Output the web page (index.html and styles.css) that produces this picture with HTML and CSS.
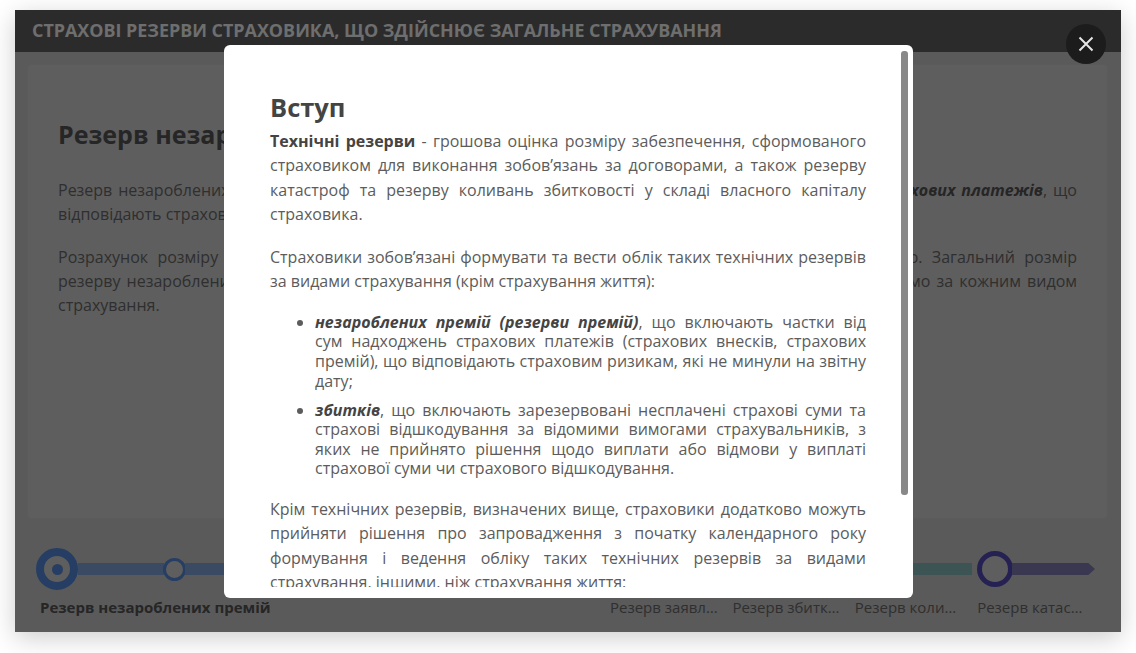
FILE: index.html
```html
<!DOCTYPE html>
<html lang="uk">

<head>
  <meta charset="UTF-8">
  <title>Страхові резерви</title>
  <link rel="stylesheet" href="styles.css">
</head>

<body>
  <div class="player">
    <header class="player-head">Страхові резерви страховика, що здійснює загальне страхування</header>

    <main class="card">
      <h2>Резерв незароблених премій</h2>
      <p>Резерв незароблених премій включає частки сум надходжень страхових внесків (страхових премій), <b><i>страхових платежів</i></b>, що відповідають страховим ризикам, які не минули на звітну дату.</p>
      <p>Розрахунок розміру резерву незароблених премій здійснюється за кожним видом страхування окремо. Загальний розмір резерву незароблених премій страховика дорівнює сумі резервів незароблених премій, обчислених окремо за кожним видом страхування.</p>
    </main>

    <div class="timeline">
      <div class="track">
        <span class="node node-big"><span class="dot"></span></span>
        <span class="seg seg-blue seg-a"></span>
        <span class="node node-small"></span>
        <span class="seg seg-blue seg-b"></span>
        <span class="seg seg-teal"></span>
        <span class="node node-last"></span>
        <span class="seg seg-purple"></span>
      </div>
      <div class="labels">
        <span class="label label-active">Резерв незароблених премій</span>
        <span class="label">Резерв заявлених збитків</span>
        <span class="label">Резерв збитків, які виникли</span>
        <span class="label">Резерв коливань збитковості</span>
        <span class="label">Резерв катастроф</span>
      </div>
    </div>

    <div class="dim"></div>
    <button class="close" aria-label="Закрити">
      <svg width="16" height="16" viewBox="0 0 16 16">
        <path d="M1.5 1.5l13 13M14.5 1.5l-13 13" stroke="#e6e6e6" stroke-width="2" fill="none" />
      </svg>
    </button>

    <div class="modal">
      <div class="modal-body">
        <h2>Вступ</h2>
        <p class="first"><b>Технічні резерви</b> - грошова оцінка розміру забезпечення, сформованого страховиком для виконання зобов’язань за договорами, а також резерву катастроф та резерву коливань збитковості у складі власного капіталу страховика.</p>
        <p>Страховики зобов’язані формувати та вести облік таких технічних резервів за видами страхування (крім страхування життя):</p>
        <ul>
          <li><span class="full-line"><b><i>незароблених премій (резерви премій)</i></b>, що включають частки від</span> сум надходжень страхових платежів (страхових внесків, страхових премій), що відповідають страховим ризикам, які не минули на звітну дату;</li>
          <li><b><i>збитків</i></b>, що включають зарезервовані несплачені страхові суми та страхові відшкодування за відомими вимогами страхувальників, з яких не прийнято рішення щодо виплати або відмови у виплаті страхової суми чи страхового відшкодування.</li>
        </ul>
        <p>Крім технічних резервів, визначених вище, страховики додатково можуть прийняти рішення про запровадження з початку календарного року формування і ведення обліку таких технічних резервів за видами страхування, іншими, ніж страхування життя:</p>
      </div>
      <div class="thumb"></div>
    </div>
  </div>
</body>

</html>
```

FILE: styles.css
```css
* {
  box-sizing: border-box;
}

html,
body {
  height: 100%;
}

body {
  margin: 0;
  padding: 10px 15px 21px;
  background: #fff;
  color: #5c5c5c;
  font-family: "Open Sans", sans-serif;
  overflow: hidden;
}

.player {
  position: relative;
  height: 622px;
  display: flex;
  flex-direction: column;
  background: #b4b4b4;
  box-shadow: 0 6px 24px rgba(0, 0, 0, .2);
}

.player-head {
  height: 42px;
  padding: 0 17px;
  flex: none;
  background: #565656;
  color: #dcdcdc;
  font-size: 17.9px;
  font-weight: 700;
  line-height: 41px;
  text-transform: uppercase;
  white-space: nowrap;
}

/* card with the slide text */
.card {
  height: 455px;
  margin: 12px 13px 0 12px;
  padding: 54px 30px 0;
  flex: none;
  background: #bcbcbc;
  border-radius: 4px;
  border: 1px solid #b6b6b6;
  color: #5e5e5e;
  font-size: 16px;
  line-height: 24px;
  text-align: justify;
}

.card h2 {
  margin: 0 0 29px;
  font-size: 25px;
  line-height: 30px;
  font-weight: 700;
  color: #4c4c4c;
  text-align: left;
}

.card b {
  color: #4c4c4c;
}

.card p {
  margin: 0 0 19px;
}

/* timeline */
.timeline {
  padding: 29px 26px 0 21px;
}

.track {
  display: flex;
  align-items: center;
  height: 42px;
}

.node {
  flex: none;
  border-radius: 50%;
  border-style: solid;
  background: #bcbcbc;
  display: flex;
  align-items: center;
  justify-content: center;
}

.node-big {
  width: 42px;
  height: 42px;
  border-width: 8px;
  border-color: #4c7cc8;
}

.dot {
  width: 11px;
  height: 11px;
  border-radius: 50%;
  background: #4c7cc8;
}

.node-small {
  width: 23px;
  height: 23px;
  border-width: 3px;
  border-color: #4c7cc8;
  margin-left: -1px;
  margin-right: -1px;
}

.node-last {
  width: 36px;
  height: 36px;
  border-width: 5px;
  border-color: #4a42a4;
  margin-left: 5px;
  margin-right: -1px;
}

.seg {
  height: 12px;
}

.seg-blue {
  background: #7494c4;
}

.seg-a {
  width: 86px;
}

.seg-b {
  width: 400px;
}

.seg-teal {
  flex: 1;
  background: #78a8a6;
}

.seg-purple {
  width: 83px;
  background: #7470a0;
  clip-path: polygon(0 0, 92% 0, 100% 50%, 92% 100%, 0 100%);
}

.labels {
  display: flex;
  margin-top: 7px;
  padding-left: 4px;
  color: #5e5e5e;
  font-size: 15px;
  line-height: 20px;
}

.label {
  width: 122.4px;
  padding-right: 14px;
  flex: none;
  white-space: nowrap;
  overflow: hidden;
  text-overflow: ellipsis;
}

.label-active {
  width: 570px;
  font-weight: 700;
  color: #4c4c4c;
}

/* dark layer and the popup */
.dim {
  position: absolute;
  inset: 0;
  background: rgba(0, 0, 0, .5);
}

.close {
  position: absolute;
  top: 14px;
  right: 15px;
  width: 40px;
  height: 40px;
  padding: 0;
  border: 0;
  border-radius: 50%;
  background: #1c1c1c;
  display: flex;
  align-items: center;
  justify-content: center;
}

.modal {
  position: absolute;
  top: 35px;
  left: 209px;
  width: 689px;
  height: 553px;
  padding-bottom: 11px;
  background: #fff;
  border-radius: 6px;
}

.modal-body {
  height: 100%;
  padding: 45px 47px 0 46px;
  overflow: hidden;
  font-size: 16px;
  line-height: 24.3px;
  text-align: justify;
}

.modal-body h2 {
  margin: 0 0 5px;
  font-size: 25.5px;
  line-height: 34px;
  font-weight: 700;
  color: #444;
}

.modal-body b {
  color: #444;
}

.modal-body p {
  margin: 0 0 19px;
}

.modal-body ul {
  margin: 0 0 18px;
  padding-left: 45px;
  line-height: 19.6px;
}

.modal-body li {
  margin-bottom: 9.4px;
}

/* keeps the first list line broken where the source breaks it */
.full-line {
  display: block;
  text-align-last: justify;
}

.thumb {
  position: absolute;
  top: 6px;
  right: 5px;
  width: 7px;
  height: 444px;
  border-radius: 3px;
  background: #888;
}
```
